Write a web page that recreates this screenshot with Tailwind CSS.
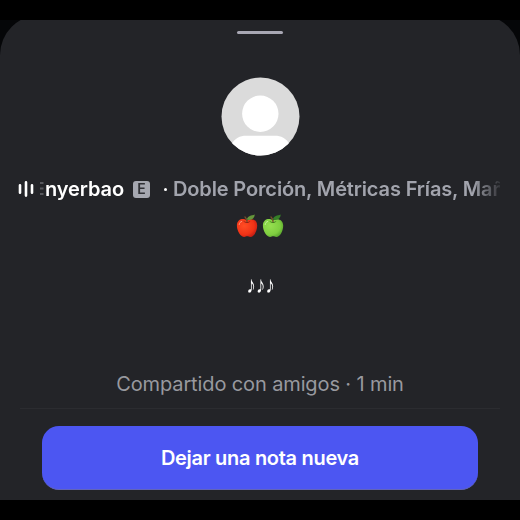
<!DOCTYPE html>
<html lang="es">
<head>
<meta charset="utf-8">
<title>Nota</title>
<script src="https://cdn.jsdelivr.net/npm/@tailwindcss/browser@4"></script>
</head>
<body class="bg-black">
<main class="flex h-[520px] w-[520px] flex-col overflow-hidden bg-black py-5 font-['Inter','Liberation_Sans',sans-serif]">
  <div class="h-[480px] w-full overflow-hidden bg-[#050608]">
    <section class="-mt-[5px] flex h-[485px] w-full flex-col items-center rounded-t-[40px] bg-[#232428]">
      <div class="mt-4 h-[3px] w-[46px] shrink-0 rounded-full bg-[#a8a7b3]"></div>

      <svg class="mt-[43px] h-[79px] w-[79px] shrink-0" viewBox="0 0 79 79">
        <defs><clipPath id="avatar"><circle cx="39.5" cy="39.5" r="39"/></clipPath></defs>
        <g clip-path="url(#avatar)">
          <rect width="79" height="79" fill="#dbdbdb"/>
          <circle cx="39.3" cy="36.7" r="18.2" fill="#fff"/>
          <path d="M10 79V68C14 61 19 58.8 25 58.8H54C60 58.8 65 61 69 68V79Z" fill="#fff"/>
        </g>
      </svg>

      <div class="mt-[20px] flex h-[26px] w-full shrink-0 items-center pl-[18px] pr-[20px]">
        <svg class="h-4 w-4 shrink-0" viewBox="0 0 16 16" fill="none" stroke="#fff" stroke-width="2.6" stroke-linecap="round"><path d="M2 4.2v7.6M8 1.4v13.2M14 4.2v7.6"/></svg>
        <svg class="ml-[6px] h-4 w-[4px] shrink-0" viewBox="0 0 4 16" fill="#57585d"><path d="M0 1h3.5v2H0zM0 6.5h3.5v2H0zM0 12h3.5v2H0z"/></svg>
        <div class="flex min-w-0 flex-1 items-center overflow-hidden whitespace-nowrap text-[20px] leading-[26px] font-medium [mask-image:linear-gradient(to_right,black_94%,transparent_101%)]">
          <span class="w-[89px] shrink-0 pl-px text-white font-semibold tracking-[-0.1px]">nyerbao</span>
          <span class="flex h-[17px] w-[17px] shrink-0 items-center justify-center rounded-[3px] bg-[#a5a7b0] text-[14px] leading-none font-semibold text-[#303136]">E</span>
          <span class="ml-[14px] h-[3px] w-[3px] shrink-0 rounded-full bg-white"></span>
          <span class="ml-[6px] font-semibold tracking-[-0.14px] text-[#a2a4ad]">Doble Porción, Métricas Frías, Mañana</span>
        </div>
      </div>

      <div class="mt-[12px] flex shrink-0 gap-[4px]">
        <svg class="h-6 w-[22px]" viewBox="0 0 22 24">
          <defs><radialGradient id="red" cx=".36" cy=".38" r=".75"><stop stop-color="#ff4d24"/><stop offset=".65" stop-color="#f03216"/><stop offset="1" stop-color="#b51813"/></radialGradient></defs>
          <path d="M11 6.5C8 3.8 1 4.5.9 11.5.9 17.5 5 23 8.2 23c1.5 0 1.8-.7 3-.7s1.6.7 3.2.7c3.4 0 6.8-5.4 6.8-11.4C21.2 5 14.5 3.8 11 6.5Z" fill="url(#red)"/>
          <path d="M7.2 6.7c2.5 1.7 5 1.6 7.2.2-1.6 2.7-5.3 2.8-7.2-.2Z" fill="#8e2414"/>
          <path d="M11 7.5c-.1-2-.8-3.4-2-4.5" fill="none" stroke="#76502b" stroke-width="1.3" stroke-linecap="round"/>
          <path d="M10.8 5.5C12 1.7 15.2 1.7 18.8.5c-.3 4.6-3.8 6.2-8 5Z" fill="#65963b"/>
          <path d="M3.2 10.5c.2-1.8 1.1-2.7 2.5-3" fill="none" stroke="#ff9b7e" stroke-width="1" stroke-linecap="round"/>
        </svg>
        <svg class="h-6 w-[22px]" viewBox="0 0 22 24">
          <defs><radialGradient id="green" cx=".36" cy=".38" r=".75"><stop stop-color="#96df50"/><stop offset=".65" stop-color="#7fce40"/><stop offset="1" stop-color="#509b29"/></radialGradient></defs>
          <path d="M11 6.5C8 3.8 1 4.5.9 11.5.9 17.5 5 23 8.2 23c1.5 0 1.8-.7 3-.7s1.6.7 3.2.7c3.4 0 6.8-5.4 6.8-11.4C21.2 5 14.5 3.8 11 6.5Z" fill="url(#green)"/>
          <path d="M7.2 6.7c2.5 1.7 5 1.6 7.2.2-1.6 2.7-5.3 2.8-7.2-.2Z" fill="#3f7a20"/>
          <path d="M11 7.5c-.1-2-.8-3.4-2-4.5" fill="none" stroke="#76502b" stroke-width="1.3" stroke-linecap="round"/>
          <path d="M10.8 5.5C12 1.7 15.2 1.7 18.8.5c-.3 4.6-3.8 6.2-8 5Z" fill="#357e27"/>
          <path d="M3.2 10.5c.2-1.8 1.1-2.7 2.5-3" fill="none" stroke="#c6f29d" stroke-width="1" stroke-linecap="round"/>
        </svg>
      </div>

      <p class="mt-[34px] ml-px h-[26px] shrink-0 scale-y-[1.25] font-['Liberation_Sans',sans-serif] text-[19px] leading-[26px] text-white">♪♪♪</p>

      <p class="mt-[74px] h-[25px] shrink-0 whitespace-nowrap text-[20px] leading-[25px] tracking-[-0.12px] text-[#98999f]">Compartido con amigos · 1 min</p>
      <div class="mt-[11px] h-px w-[480px] shrink-0 bg-[#2b2c30]"></div>
      <button class="mt-[17px] h-[64px] w-[436px] shrink-0 rounded-[17px] border-b border-[#6365b8] bg-[#4c56f2] text-[20px] font-semibold tracking-[-0.3px] text-white">Dejar una nota nueva</button>
    </section>
  </div>
</main>
</body>
</html>
